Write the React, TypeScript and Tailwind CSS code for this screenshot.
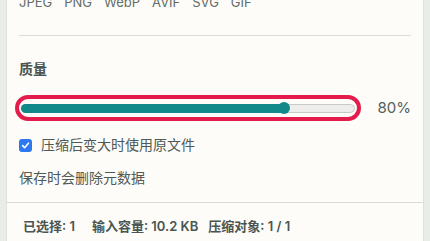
import React from 'react';

const formats = ['JPEG', 'PNG', 'WebP', 'AVIF', 'SVG', 'GIF'];

export default function App() {
  const quality = 80;

  return (
    <div
      className="w-[430px] h-[241px] overflow-hidden bg-[#e9ede8] px-[6px]"
      style={{ fontFamily: 'Inter, "Noto Sans CJK SC", sans-serif' }}
    >
      <div className="h-full bg-[#fdfcf8] border-x border-[#dfe1da] flex flex-col">
        {/* Settings */}
        <div className="px-3">
          {/* Output formats */}
          <div className="mt-[-6px] flex gap-3 text-[13px] leading-4 text-[#636c68]">
            {formats.map((f) => (
              <span key={f}>{f}</span>
            ))}
          </div>

          <div className="mt-[25px] h-px bg-[#dcdcd5]" />

          {/* Quality */}
          <div className="mt-[23px] text-[14px] leading-5 font-bold text-[#4a5450]">质量</div>

          <div className="mt-4 flex items-center">
            <div className="-ml-1 w-[346px] h-[26px] border-4 border-[#e31c4b] rounded-full flex items-center px-[2px]">
              <div className="relative w-full h-[9px] rounded-full bg-[#ededeb] border border-[#c9cac6]">
                <div
                  className="absolute -left-px -top-px -bottom-px rounded-full bg-[#11898a]"
                  style={{ width: `${quality - 1}%` }}
                />
                <div
                  className="absolute top-1/2 -translate-y-1/2 -translate-x-1/2 w-3 h-3 rounded-full bg-[#11898a]"
                  style={{ left: `${quality - 1}%` }}
                />
              </div>
            </div>
            <span className="ml-auto text-[15px] text-[#545e5a]">{quality}%</span>
          </div>

          {/* Options */}
          <label className="mt-[14px] flex items-center gap-[9px] text-[14px] leading-5 text-[#4f5955]">
            <span className="w-[13px] h-[13px] rounded-[3px] bg-[#2b78f0] flex items-center justify-center">
              <svg width="9" height="9" viewBox="0 0 10 10" fill="none">
                <path d="M1.8 5.2 L4 7.4 L8.3 2.4" stroke="white" strokeWidth="1.8" strokeLinecap="round" strokeLinejoin="round" />
              </svg>
            </span>
            压缩后变大时使用原文件
          </label>

          <div className="mt-[13px] text-[14px] leading-5 text-[#4f5955]">保存时会删除元数据</div>
        </div>

        <div className="mt-[14px] h-px bg-[#dcdcd5]" />

        {/* Footer */}
        <div className="pt-[15px] px-4 flex text-[13px] leading-4 font-semibold text-[#4a5450]">
          <span className="mr-[17px]">已选择: 1</span>
          <span className="mr-[10px]">输入容量: 10.2 KB</span>
          <span>压缩对象: 1 / 1</span>
        </div>
      </div>
    </div>
  );
}
